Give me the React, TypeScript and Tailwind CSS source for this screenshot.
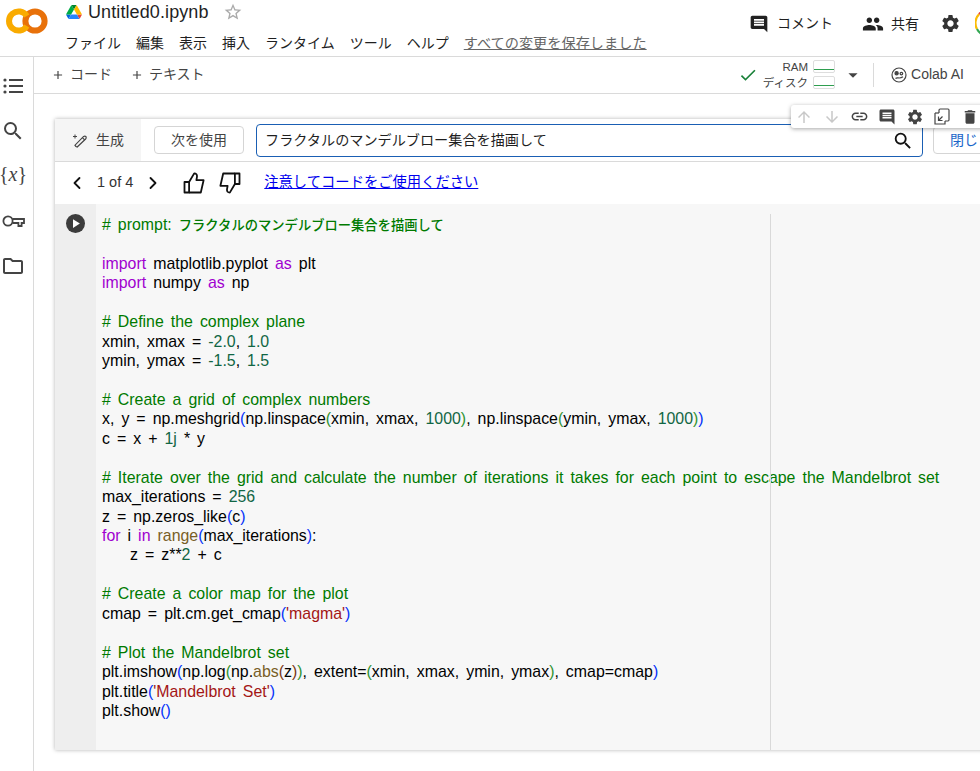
import { ChevronLeft, ChevronRight } from "lucide-react";
import {
  MdAdd,
  MdArrowDownward,
  MdArrowDropDown,
  MdArrowUpward,
  MdCheck,
  MdDelete,
  MdInsertComment,
  MdLink,
  MdOutlineFolder,
  MdPeople,
  MdPlayArrow,
  MdSearch,
  MdSettings,
  MdStarBorder,
} from "react-icons/md";

const C = "text-[#007a00]";
const K = "text-[#a000d0]";
const N = "text-[#116644]";
const S = "text-[#a31515]";
const F = "text-[#795e26]";
const B1 = "text-[#0431fa]";
const B2 = "text-[#319331]";
const B3 = "text-[#7b3814]";
const T = "";
const JP = "text-[#007a00] text-[13.3px] font-medium [word-spacing:0]";
const INDENT = "inline-block w-[28px]";

type Token = [string, string];

const CODE: Token[][] = [
  [["# prompt: ", C], ["フラクタルのマンデルブロー集合を描画して", JP]],
  [],
  [["import", K], [" matplotlib.pyplot ", T], ["as", K], [" plt", T]],
  [["import", K], [" numpy ", T], ["as", K], [" np", T]],
  [],
  [["# Define the complex plane", C]],
  [["xmin, xmax = ", T], ["-2.0", N], [", ", T], ["1.0", N]],
  [["ymin, ymax = ", T], ["-1.5", N], [", ", T], ["1.5", N]],
  [],
  [["# Create a grid of complex numbers", C]],
  [
    ["x, y = np.meshgrid", T], ["(", B1], ["np.linspace", T], ["(", B2], ["xmin, xmax, ", T], ["1000", N], [")", B2],
    [", np.linspace", T], ["(", B2], ["ymin, ymax, ", T], ["1000", N], [")", B2], [")", B1],
  ],
  [["c = x + ", T], ["1j", N], [" * y", T]],
  [],
  [["# Iterate over the grid and calculate the number of iterations it takes for each point to escape the Mandelbrot set", C]],
  [["max_iterations = ", T], ["256", N]],
  [["z = np.zeros_like", T], ["(", B1], ["c", T], [")", B1]],
  [["for", K], [" i ", T], ["in", K], [" ", T], ["range", F], ["(", B1], ["max_iterations", T], [")", B1], [":", T]],
  [["", INDENT], ["z = z**", T], ["2", N], [" + c", T]],
  [],
  [["# Create a color map for the plot", C]],
  [["cmap = plt.cm.get_cmap", T], ["(", B1], ["'magma'", S], [")", B1]],
  [],
  [["# Plot the Mandelbrot set", C]],
  [
    ["plt.imshow", T], ["(", B1], ["np.log", T], ["(", B2], ["np.", T], ["abs", F], ["(", B3], ["z", T], [")", B3], [")", B2],
    [", extent=", T], ["(", B2], ["xmin, xmax, ymin, ymax", T], [")", B2], [", cmap=cmap", T], [")", B1],
  ],
  [["plt.title", T], ["(", B1], ["'Mandelbrot Set'", S], [")", B1]],
  [["plt.show", T], ["()", B1]],
];

function ColabLogo() {
  return (
    <svg width="42" height="26" viewBox="0 0 42 26" className="shrink-0">
      <circle cx="29" cy="13" r="9.6" fill="none" stroke="#e8710a" strokeWidth="6" />
      <path d="M20.8 8 A9.6 9.6 0 1 0 20.8 18" fill="none" stroke="#f9ab00" strokeWidth="6" />
    </svg>
  );
}

function DriveLogo() {
  return (
    <svg width="16" height="14" viewBox="0 0 87.3 78" className="shrink-0">
      <path d="m6.6 66.85 3.85 6.65c.8 1.4 1.95 2.5 3.3 3.3l13.75-23.8h-27.5c0 1.55.4 3.1 1.2 4.5z" fill="#0066da" />
      <path d="m43.65 25-13.75-23.8c-1.35.8-2.5 1.9-3.3 3.3l-25.4 44a9.06 9.06 0 0 0 -1.2 4.5h27.5z" fill="#00ac47" />
      <path d="m73.55 76.8c1.35-.8 2.5-1.9 3.3-3.3l1.6-2.75 7.65-13.25c.8-1.4 1.2-2.95 1.2-4.5h-27.502l5.852 11.5z" fill="#ea4335" />
      <path d="m43.65 25 13.75-23.8c-1.35-.8-2.9-1.2-4.5-1.2h-18.5c-1.6 0-3.15.45-4.5 1.2z" fill="#00832d" />
      <path d="m59.8 53h-32.3l-13.75 23.8c1.35.8 2.9 1.2 4.5 1.2h50.8c1.6 0 3.15-.45 4.5-1.2z" fill="#2684fc" />
      <path d="m73.4 26.5-12.7-22c-.8-1.4-1.95-2.5-3.3-3.3l-13.75 23.8 16.15 28h27.45c0-1.55-.4-3.1-1.2-4.5z" fill="#ffba00" />
    </svg>
  );
}

function AvatarRing() {
  return (
    <svg width="26" height="26" viewBox="0 0 26 26" fill="none" strokeWidth="2.2" className="shrink-0">
      <path d="M22 4 A12.5 12.5 0 0 0 4 4.2" stroke="#ea4335" />
      <path d="M4 4.2 A12.5 12.5 0 0 0 2 19" stroke="#fbbc04" />
      <path d="M2 19 A12.5 12.5 0 0 0 22 22" stroke="#34a853" />
    </svg>
  );
}

function ColabAiIcon() {
  return (
    <svg width="16" height="16" viewBox="0 0 16 16" fill="none" stroke="#444" strokeWidth="1.2" className="shrink-0">
      <circle cx="8" cy="8" r="7" />
      <circle cx="5.6" cy="6.2" r="1.6" fill="#444" />
      <circle cx="10.4" cy="6.6" r="1.3" />
      <path d="M4.5 11.5 C6.5 9.6 8 12.6 12 9.8" />
    </svg>
  );
}

function GenerateIcon() {
  return (
    <svg width="16" height="15" viewBox="0 0 16 15" fill="none" stroke="#444" strokeWidth="1.2" className="shrink-0">
      <path d="M4 13.6 L3 12.2 L11.6 3.4 Q13 2.6 14 3.6 Q14.6 5 13.6 6 L5.2 14 Z" />
      <path d="M10.4 4.6 L12.6 6.8" />
      <path d="M3 1.5v4M1 3.5h4" strokeWidth="1" />
    </svg>
  );
}

function ThumbIcon({ className }: { className?: string }) {
  return (
    <svg width="22" height="22" viewBox="0 0 22 22" fill="none" stroke="#111" strokeWidth="1.8" strokeLinejoin="round" className={className}>
      <path d="M1.5 10h4.6v10.5H1.5z" />
      <path d="M6.1 10 L11.2 1.4 C13.2 1.4 14.2 2.6 14 4.6 L13.4 8.2 H20.6 L17.8 20.5 H6.1" />
    </svg>
  );
}

function KeyIcon() {
  return (
    <svg width="23" height="14" viewBox="0 0 23 14" fill="none" stroke="#444" strokeWidth="1.8" className="shrink-0 my-[5px]">
      <circle cx="6" cy="7" r="4.6" />
      <path d="M10.4 5 H22 V9 H19.6 V12 H16.4 V9 H10.4" />
    </svg>
  );
}

function ResourceBars() {
  return (
    <div className="flex flex-col gap-[2px] text-[11.5px] leading-[14px] text-[#444] items-end">
      <div className="flex items-center gap-[5px]">
        <span>RAM</span>
        <span className="w-[22px] h-[13px] rounded-[2px] border border-[#ddd] relative">
          <span className="absolute left-0 right-0 bottom-[2px] h-px bg-[#2e9e4f]" />
        </span>
      </div>
      <div className="flex items-center gap-[5px]">
        <span>ディスク</span>
        <span className="w-[22px] h-[13px] rounded-[2px] border border-[#ddd] relative">
          <span className="absolute left-0 right-0 bottom-[2px] h-px bg-[#2e9e4f]" />
        </span>
      </div>
    </div>
  );
}

const TOOL_CELL = "w-[27.7px] flex justify-center shrink-0";

export default function App() {
  return (
    <div className="w-[980px] h-[771px] overflow-hidden bg-white text-[#1f1f1f] font-['Liberation_Sans','Noto_Sans_CJK_JP',sans-serif] relative">
      <header className="h-[57px] border-b border-[#dadada] flex">
        <div className="w-[65px] pl-[6px] pt-[8px]">
          <ColabLogo />
        </div>
        <div className="flex-1 min-w-0">
          <div className="flex items-center h-[24px] mt-[0px] pl-[1px]">
            <DriveLogo />
            <span className="ml-[6px] text-[18px] tracking-[0.1px]">Untitled0.ipynb</span>
            <MdStarBorder size={20} className="ml-[14px] text-[#aaa]" />
          </div>
          <div className="flex items-center gap-[15px] mt-[8px] text-[14px] leading-[22px]">
            <span>ファイル</span>
            <span>編集</span>
            <span>表示</span>
            <span>挿入</span>
            <span>ランタイム</span>
            <span>ツール</span>
            <span>ヘルプ</span>
            <span className="underline text-[#666] text-[14.2px]">すべての変更を保存しました</span>
          </div>
        </div>
        <div className="flex items-start pt-[13px] text-[14px]">
          <div className="flex items-center">
            <MdInsertComment size={20} className="text-[#222]" />
            <span className="ml-[8px]">コメント</span>
          </div>
          <div className="flex items-center ml-[29px]">
            <MdPeople size={22} className="text-[#222]" />
            <span className="ml-[7px]">共有</span>
          </div>
          <MdSettings size={21} className="ml-[21px] text-[#333]" />
          <div className="ml-[14px] w-[5px] h-[26px] overflow-hidden -mt-[3px]">
            <AvatarRing />
          </div>
        </div>
      </header>

      <div className="flex h-[714px]">
        <aside className="w-[34px] border-r border-[#dadada] flex flex-col items-center pt-[18px] pr-[7px] gap-[22px] text-[#444] shrink-0">
          <svg width="22" height="22" viewBox="0 0 22 22" fill="#444" className="shrink-0">
            <circle cx="3" cy="5" r="1.6" />
            <circle cx="3" cy="11" r="1.6" />
            <circle cx="3" cy="17" r="1.6" />
            <rect x="7" y="4" width="14" height="2" />
            <rect x="7" y="10" width="14" height="2" />
            <rect x="7" y="16" width="14" height="2" />
          </svg>
          <MdSearch size={24} className="shrink-0" />
          <span className="font-['Liberation_Serif',serif] text-[20px] leading-[22px] text-[#444] -mt-[2px] mb-[2px]">
            {"{"}
            <span className="italic">x</span>
            {"}"}
          </span>
          <KeyIcon />
          <MdOutlineFolder size={24} className="shrink-0 -mt-[1px]" />
        </aside>

        <main className="flex-1 min-w-0">
          <div className="h-[37px] border-b border-[#dadada] flex items-center pb-[1px] text-[14px] text-[#444]">
            <div className="flex items-center ml-[17px]">
              <MdAdd size={14} />
              <span className="ml-[5px]">コード</span>
            </div>
            <div className="flex items-center ml-[18px]">
              <MdAdd size={14} />
              <span className="ml-[5px]">テキスト</span>
            </div>
            <div className="ml-auto flex items-center">
              <MdCheck size={20} className="text-[#188038]" />
              <div className="ml-[5px]">
                <ResourceBars />
              </div>
              <MdArrowDropDown size={22} className="ml-[7px] text-[#444]" />
              <span className="w-px h-[24px] bg-[#dadada] ml-[9px]" />
              <div className="flex items-center ml-[17px] mr-[16px] text-[#444] text-[14px]">
                <ColabAiIcon />
                <span className="ml-[4px]">Colab AI</span>
              </div>
            </div>
          </div>

          <div className="ml-[21px] mt-[25px] w-[1000px] h-[631px] shadow-[0_0_4px_rgba(0,0,0,0.3)] flex flex-col">
            <div className="h-[43px] border-b border-[#dadada] flex items-center bg-white shrink-0">
              <div className="w-[86px] h-full bg-[#f5f5f5] flex items-center pl-[17px] text-[14px] text-[#444]">
                <GenerateIcon />
                <span className="ml-[8px]">生成</span>
              </div>
              <div className="ml-[13px] w-[90px] h-[28px] rounded-[4px] border border-[#d5d5d5] flex items-center justify-center text-[14px] text-[#444]">
                次を使用
              </div>
              <div className="ml-[12px] w-[667px] h-[33px] mt-px rounded-[4px] border border-[#1a5fb4] flex items-center pl-[8px] pr-[8px] text-[14.15px]">
                <span>フラクタルのマンデルブロー集合を描画して</span>
                <MdSearch size={22} className="ml-auto text-[#111]" />
              </div>
              <div className="ml-[10px] w-[60px] h-[28px] rounded-[4px] border border-[#d5d5d5] flex items-center pl-[16px] text-[14px] text-[#1a66c9]">
                閉じ
              </div>
            </div>
            <div className="h-[42px] flex items-center bg-white shrink-0 text-[14.3px]">
              <ChevronLeft size={20} strokeWidth={2.2} className="ml-[12px] text-[#111]" />
              <span className="ml-[10px] text-[14.5px] text-[#333]">1 of 4</span>
              <ChevronRight size={20} strokeWidth={2.2} className="ml-[10px] text-[#111]" />
              <ThumbIcon className="ml-[20px]" />
              <ThumbIcon className="ml-[14px] rotate-180" />
              <span className="ml-[23px] text-[#0000ee] underline">注意してコードをご使用ください</span>
            </div>
            <div className="flex-1 flex bg-[#f7f7f7] min-h-0">
              <div className="w-[41px] bg-[#eeeeee] shrink-0 pt-[10px] pl-[11px]">
                <div className="w-[19px] h-[19px] rounded-full bg-[#3c3c3c] flex items-center justify-center">
                  <MdPlayArrow size={15} className="text-white" />
                </div>
              </div>
              <div className="relative flex-1 pl-[6px] pt-[11px] text-[15.9px] leading-[19.45px] text-black [word-spacing:2.6px] whitespace-pre">
                <span className="absolute left-[674px] top-[10px] bottom-0 w-px bg-[#d9d9d9]" />
                {CODE.map((line, i) => (
                  <div key={i} className="h-[19.45px]">
                    {line.map(([text, cls], j) => (
                      <span key={j} className={cls}>
                        {text}
                      </span>
                    ))}
                  </div>
                ))}
              </div>
            </div>
          </div>
        </main>
      </div>

      <div className="absolute left-[791px] top-[105px] w-[195px] h-[23px] bg-white rounded-[3px] shadow-[0_1px_4px_rgba(0,0,0,0.35)] flex items-center text-[#444]">
        <span className={`${TOOL_CELL} -ml-px`}>
          <MdArrowUpward size={18} className="text-[#c8c8c8]" />
        </span>
        <span className={TOOL_CELL}>
          <MdArrowDownward size={18} className="text-[#c8c8c8]" />
        </span>
        <span className={TOOL_CELL}>
          <MdLink size={19} />
        </span>
        <span className={TOOL_CELL}>
          <MdInsertComment size={18} />
        </span>
        <span className={TOOL_CELL}>
          <MdSettings size={18} />
        </span>
        <span className={TOOL_CELL}>
          <svg width="16" height="17" viewBox="0 0 16 17" fill="none" stroke="#444" strokeWidth="1.2">
            <path d="M5 5V2.2Q5 1 6.2 1H14Q15 1 15 2.2V11.8Q15 13 14 13H11" />
            <path d="M1 5V16H11V13" />
            <path d="M1 5H5" />
            <path d="M4.5 12.5l4-4M8.5 12.5h-4v-4" />
          </svg>
        </span>
        <span className={TOOL_CELL}>
          <MdDelete size={18} />
        </span>
      </div>
    </div>
  );
}
